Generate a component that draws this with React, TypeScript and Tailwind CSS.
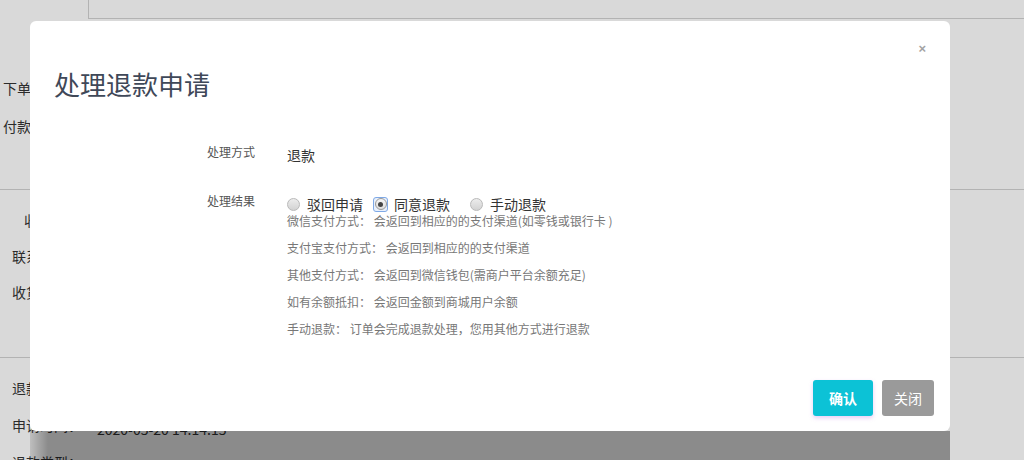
import React from "react";

function Radio({ checked }: { checked?: boolean }) {
  if (checked) {
    return (
      <span className="flex h-[15px] w-[15px] items-center justify-center rounded-[3px] border border-[#7fa9e6] bg-[#e8f0fc]">
        <span className="flex h-[12px] w-[12px] items-center justify-center rounded-full border border-[#9a9a9a] bg-[linear-gradient(#f6f6f6,#dedede)]">
          <span className="h-[5px] w-[5px] rounded-full bg-[#444]" />
        </span>
      </span>
    );
  }
  return (
    <span className="block h-[13px] w-[13px] rounded-full border border-[#b9b9b9] bg-[linear-gradient(#ececec,#d2d2d2)]" />
  );
}

function BgRow({ label, value, h, indent }: { label: string; value?: string; h: string; indent?: boolean }) {
  return (
    <div className={`flex items-center ${h}`}>
      <span className={indent ? "pl-[24px]" : "pl-[12px]"}>{label}</span>
      {value && <span className="absolute left-[97px] translate-y-[4px]">{value}</span>}
    </div>
  );
}

export default function App() {
  const help = [
    "微信支付方式： 会返回到相应的的支付渠道(如零钱或银行卡 )",
    "支付宝支付方式： 会返回到相应的的支付渠道",
    "其他支付方式： 会返回到微信钱包(需商户平台余额充足)",
    "如有余额抵扣： 会返回金额到商城用户余额",
    "手动退款： 订单会完成退款处理，您用其他方式进行退款",
  ];
  return (
    <div className="relative h-[460px] w-[1024px] overflow-hidden bg-[#d9d9d9] font-['Noto_Sans_CJK_SC','Noto_Sans',sans-serif] text-[14px] text-[#2b2b2b]">
      {/* background page */}
      <div className="ml-[88px] h-[19px] border-b border-l border-[#b3b3b3]" />
      <div className="h-[171px] border-b border-[#b3b3b3] pt-[50px]">
        <div className="flex h-[38px] items-center pl-[3px]">下单时间：</div>
        <div className="flex h-[38px] items-center pl-[3px]">付款时间：</div>
      </div>
      <div className="relative h-[168px] border-b border-[#b3b3b3] pt-[12px]">
        <BgRow label="收货信息" h="h-[36px]" indent />
        <BgRow label="联系方式：" h="h-[36px]" />
        <BgRow label="收货地址：" h="h-[37px]" />
      </div>
      <div className="relative pt-[12px]">
        <BgRow label="退款金额：" h="h-[37px]" />
        <BgRow label="申请时间：" value="2020-05-20 14:14:15" h="h-[37px]" />
        <BgRow label="退款类型：" value="退款" h="h-[37px]" />
      </div>

      {/* dim strip under modal */}
      <div className="absolute left-[30px] top-[431px] h-[29px] w-[920px] bg-[linear-gradient(to_right,rgba(0,0,0,0.12),rgba(0,0,0,0.36)_18px)]" />

      {/* modal */}
      <div className="absolute left-[30px] top-[21px] flex h-[410px] w-[920px] flex-col rounded-[6px] bg-white">
        <button className="absolute right-[24px] top-[19px] font-['Liberation_Sans',sans-serif] text-[13px] font-bold leading-[18px] text-[#a3a3a3]">×</button>
        <h2 className="pl-[24px] pt-[46px] text-[26px] font-normal leading-[34px] text-[#3f4858]">处理退款申请</h2>

        <div className="mt-[42px] flex pl-[177px]">
          <div className="w-[80px] text-[12px] leading-[18px] text-[#555]">处理方式</div>
          <div className="text-[14px] leading-[24px] text-[#333]">退款</div>
        </div>

        <div className="mt-[25px] flex pl-[177px]">
          <div className="w-[80px] text-[12px] leading-[18px] text-[#555]">处理结果</div>
          <div className="pt-[2px]">
            <div className="flex h-[20px] items-center text-[14px] text-[#333]">
              <Radio />
              <span className="ml-[7px]">驳回申请</span>
              <span className="ml-[10px]"><Radio checked /></span>
              <span className="ml-[6px]">同意退款</span>
              <span className="ml-[20px]"><Radio /></span>
              <span className="ml-[7px]">手动退款</span>
            </div>
            <div className="flex flex-col gap-[13px] text-[12px] leading-[14px] text-[#777]">
              {help.map((t) => (
                <p key={t}>{t}</p>
              ))}
            </div>
          </div>
        </div>

        <div className="mt-auto flex justify-end gap-[9px] pb-[15px] pr-[16px]">
          <button className="h-[36px] w-[60px] rounded-[3px] bg-[#0cc2d6] text-[14px] font-bold text-white shadow-[0_2px_4px_rgba(190,110,230,0.35)]">确认</button>
          <button className="h-[36px] w-[52px] rounded-[3px] bg-[#9a9a9a] text-[14px] text-white">关闭</button>
        </div>
      </div>
    </div>
  );
}
